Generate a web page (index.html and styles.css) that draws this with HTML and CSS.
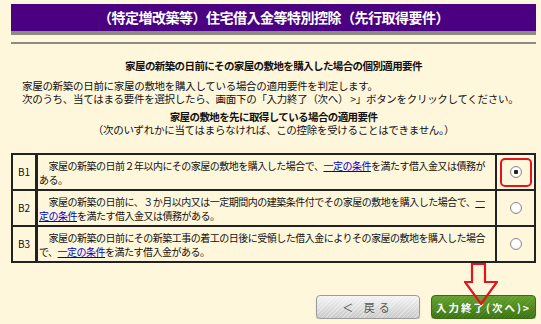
FILE: index.html
```html
<!DOCTYPE html>
<html lang="ja">
<head>
  <meta charset="UTF-8" />
  <title>住宅借入金等特別控除</title>
  <link rel="stylesheet" href="styles.css">
</head>
<body>
  <div class="page">
    <div class="title-bar">（特定増改築等）住宅借入金等特別控除（先行取得要件）</div>
    <div class="rule"></div>

    <div class="subtitle">家屋の新築の日前にその家屋の敷地を購入した場合の個別適用要件</div>

    <p class="lead">
      家屋の新築の日前に家屋の敷地を購入している場合の適用要件を判定します。<br>
      次のうち、当てはまる要件を選択したら、画面下の「入力終了（次へ） >」ボタンをクリックしてください。
    </p>

    <div class="req">
      <b>家屋の敷地を先に取得している場合の適用要件</b><br>
      （次のいずれかに当てはまらなければ、この控除を受けることはできません。）
    </div>

    <table class="choices">
      <tr>
        <td class="code">B1</td>
        <td class="text">　家屋の新築の日前２年以内にその家屋の敷地を購入した場合で、<a href="#">一定の条件</a>を満たす借入金又は債務が<br>ある。</td>
        <td class="pick"><span class="mark"><input type="radio" name="req" checked></span></td>
      </tr>
      <tr>
        <td class="code">B2</td>
        <td class="text">　家屋の新築の日前に、３か月以内又は一定期間内の建築条件付でその家屋の敷地を購入した場合で、<a href="#">一<br>定の条件</a>を満たす借入金又は債務がある。</td>
        <td class="pick"><input type="radio" name="req"></td>
      </tr>
      <tr>
        <td class="code">B3</td>
        <td class="text">　家屋の新築の日前にその新築工事の着工の日後に受領した借入金によりその家屋の敷地を購入した場合<br>で、<a href="#">一定の条件</a>を満たす借入金がある。</td>
        <td class="pick"><input type="radio" name="req"></td>
      </tr>
    </table>

    <div class="actions">
      <svg class="hint-arrow" width="34" height="42" viewBox="0 0 34 42">
        <polygon points="8,1 21,1 21,19 33,19 17,41 1,19 8,19" fill="none" stroke="#e3141d" stroke-width="2.2" stroke-linejoin="miter"/>
      </svg>
      <button class="btn back">＜ 戻る</button>
      <button class="btn next">入力終了(次へ)&gt;</button>
    </div>
  </div>
</body>
</html>
```

FILE: styles.css
```css
body {
  margin: 0;
  padding: 0;
  background: #fff7dc;
  font-family: "Noto Sans CJK JP", "Noto Sans", sans-serif;
  color: #111;
}

.page {
  width: 525px;
  margin: 4px 0 0 11px;
}

.title-bar {
  height: 27px;
  line-height: 27px;
  background: #4b0082;
  border-bottom: 4px solid #8c8c84;
  color: #fff;
  font-size: 14px;
  font-weight: bold;
  text-align: center;
  letter-spacing: -0.5px;
}

.rule {
  height: 2px;
  margin-top: 7px;
  background: #8c8c84;
}

.subtitle {
  margin-top: 15px;
  font-size: 10.5px;
  line-height: 13px;
  font-weight: bold;
  text-align: center;
  letter-spacing: -0.6px;
}

.lead {
  margin: 7px 0 0 11px;
  font-size: 10.5px;
  line-height: 13px;
  letter-spacing: -0.3px;
}

.req {
  margin-top: 5px;
  font-size: 10.5px;
  line-height: 13px;
  text-align: center;
  letter-spacing: -0.3px;
}

.req b {
  letter-spacing: -0.6px;
}

.choices {
  width: 100%;
  margin-top: 17px;
  border-collapse: collapse;
  border: 2px solid #222;
}

.choices tr {
  height: 36px;
}

.choices td {
  border: 2px solid #222;
  padding: 0;
  font-size: 10px;
  line-height: 14px;
}

.choices .code {
  width: 22px;
  text-align: center;
  border-right-width: 3px;
}

.choices .text {
  padding: 1px 2px 0 1px;
  letter-spacing: -0.5px;
  white-space: nowrap;
}

.choices .pick {
  width: 37px;
  text-align: center;
  line-height: 0;
}

.choices a {
  color: #00c;
  text-decoration: underline;
}

.mark {
  display: inline-flex;
  align-items: center;
  justify-content: center;
  width: 28px;
  height: 25px;
  border: 2px solid #e3141d;
  border-radius: 5px;
  vertical-align: middle;
}

input[type="radio"] {
  appearance: none;
  width: 12px;
  height: 12px;
  margin: 0;
  border: 1px solid #8a8a8a;
  border-radius: 50%;
  background: radial-gradient(circle at 50% 40%, #fff 40%, #e6e6e6 100%);
  vertical-align: middle;
}

input[type="radio"]:checked {
  background: radial-gradient(circle, #222 0 2px, #fff 2.5px 45%, #e6e6e6 100%);
}

.actions {
  position: relative;
  display: flex;
  justify-content: flex-end;
  gap: 11px;
  margin-top: 32px;
}

.btn {
  height: 24px;
  padding: 0;
  border-radius: 4px;
  font-family: "Noto Sans CJK JP", sans-serif;
  font-size: 11px;
  cursor: pointer;
}

.back {
  width: 104px;
  border: 1px solid #9a9a9a;
  color: #555;
  letter-spacing: 4px;
  background:
    repeating-linear-gradient(135deg, rgba(255,255,255,0.35) 0 1px, transparent 1px 3px),
    linear-gradient(#f4f4f4, #c9c9c9);
  box-shadow: 0 1px 1px rgba(0,0,0,0.3);
}

.next {
  width: 105px;
  border: 1px solid #3c6b14;
  color: #fff;
  font-size: 10.5px;
  font-weight: bold;
  letter-spacing: 2px;
  background:
    repeating-linear-gradient(135deg, rgba(255,255,255,0.08) 0 1px, transparent 1px 3px),
    linear-gradient(#62a02c, #3b7410);
  box-shadow: 0 1px 1px rgba(0,0,0,0.3);
}

.hint-arrow {
  position: absolute;
  right: 38px;
  top: -32px;
  z-index: 2;
}
```
